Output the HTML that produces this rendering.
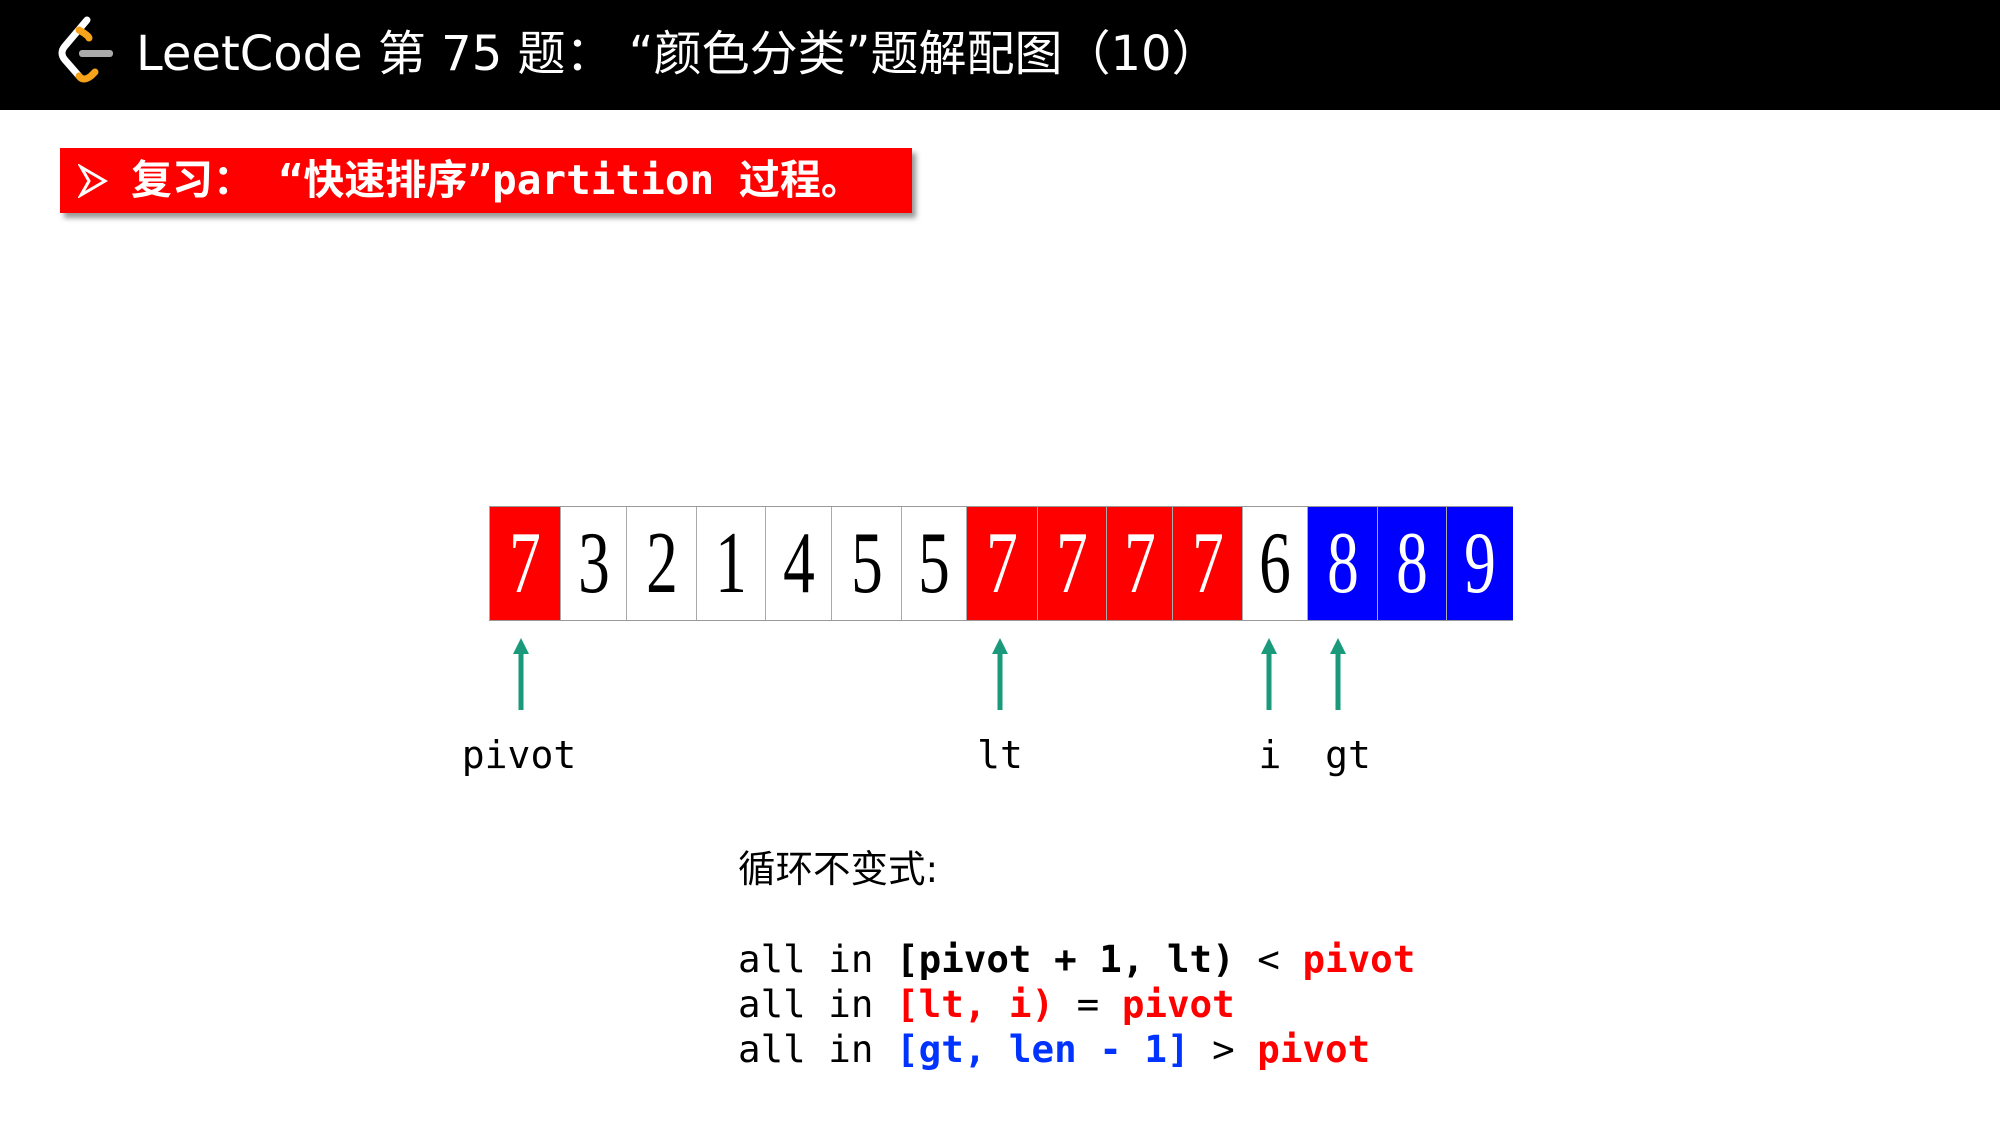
<!DOCTYPE html>
<html><head><meta charset="utf-8"><style>
body{margin:0;width:2000px;height:1125px;background:#fff;position:relative;overflow:hidden;font-family:"Liberation Sans","Noto Sans CJK SC",sans-serif}
.hdr{position:absolute;left:0;top:0;width:2000px;height:110px;background:#000}
.title{position:absolute;left:136px;top:22px;color:#fff;font-size:48px;line-height:64px;white-space:nowrap;font-family:"DejaVu Sans","Noto Sans CJK SC",sans-serif}
.ban{position:absolute;left:60px;top:148px;width:852px;height:65px;background:#f00;box-shadow:4px 5px 5px #999}
.ban span{position:absolute;left:71px;top:4px;color:#fff;font-weight:bold;font-size:41px;line-height:56px;white-space:nowrap;font-family:"DejaVu Sans Mono","Noto Sans CJK SC",monospace}
.c{position:absolute;top:507px;height:113px;border-left:1px solid #aaa;box-sizing:border-box;overflow:hidden;text-align:center;font-family:"Liberation Serif",serif;font-size:88px;line-height:113px}
.c b{display:inline-block;font-weight:normal;transform:scaleX(0.72)}
.r{background:#f00;color:#fff}.w{background:#fff;color:#000}.bl{background:#00f;color:#fff}
.lab{position:absolute;top:732px;font-family:"DejaVu Sans Mono",monospace;font-size:38px;line-height:46px;transform:translateX(-50%)}
.code{position:absolute;left:738px;font-family:"DejaVu Sans Mono","Noto Sans CJK SC",monospace;font-size:37.5px;line-height:45px;white-space:pre}
.k{font-weight:bold}.red{color:#f00;font-weight:bold}.blu{color:#0033ff;font-weight:bold}
</style></head><body>
<div class="hdr"></div>
<svg style="position:absolute;left:55px;top:16px" width="62" height="72" viewBox="0 0 62 72">
<path d="M32 4 L10 30 Q4 37 10 44 L24 60" stroke="#fff" stroke-width="7" fill="none" stroke-linecap="round"/>
<path d="M24 14 Q34 20 34 22" stroke="#f7a21b" stroke-width="7" fill="none" stroke-linecap="round"/>
<path d="M24 60 Q28 66 36 60 L40 56" stroke="#f7a21b" stroke-width="7" fill="none" stroke-linecap="round"/>
<rect x="24" y="34" width="34" height="7" rx="3" fill="#aaa"/>
</svg>
<div class="title">LeetCode 第 75 题： “颜色分类”题解配图（10）</div>
<div class="ban"><svg style="position:absolute;left:18px;top:16px" width="30" height="34" viewBox="0 0 30 34"><path d="M3 3 L27 17 L3 31 L11 17 Z" fill="none" stroke="#fff" stroke-width="3"/></svg><span>复习： “快速排序”partition 过程。</span></div>
<div style="position:absolute;left:489px;top:506px;width:1024px;height:115px;border:1px solid #999;box-sizing:border-box"></div>
<div class="c r" style="left:489px;width:71px"><b>7</b></div>
<div class="c w" style="left:560px;width:66px"><b>3</b></div>
<div class="c w" style="left:626px;width:70px"><b>2</b></div>
<div class="c w" style="left:696px;width:69px"><b>1</b></div>
<div class="c w" style="left:765px;width:66px"><b>4</b></div>
<div class="c w" style="left:831px;width:70px"><b>5</b></div>
<div class="c w" style="left:901px;width:65px"><b>5</b></div>
<div class="c r" style="left:966px;width:71px"><b>7</b></div>
<div class="c r" style="left:1037px;width:69px"><b>7</b></div>
<div class="c r" style="left:1106px;width:66px"><b>7</b></div>
<div class="c r" style="left:1172px;width:70px"><b>7</b></div>
<div class="c w" style="left:1242px;width:65px"><b>6</b></div>
<div class="c bl" style="left:1307px;width:70px"><b>8</b></div>
<div class="c bl" style="left:1377px;width:69px"><b>8</b></div>
<div class="c bl" style="left:1446px;width:67px"><b>9</b></div>
<svg style="position:absolute;left:0;top:630px" width="2000" height="90">
<g fill="#1a9a7a" stroke="#1a9a7a" stroke-width="5">
<line x1="521" y1="20" x2="521" y2="80"/><path d="M513 24 L521 8 L529 24Z" stroke="none"/>
<line x1="1000" y1="20" x2="1000" y2="80"/><path d="M992 24 L1000 8 L1008 24Z" stroke="none"/>
<line x1="1269" y1="20" x2="1269" y2="80"/><path d="M1261 24 L1269 8 L1277 24Z" stroke="none"/>
<line x1="1338" y1="20" x2="1338" y2="80"/><path d="M1330 24 L1338 8 L1346 24Z" stroke="none"/>
</g></svg>
<div class="lab" style="left:519px">pivot</div>
<div class="lab" style="left:1000px">lt</div>
<div class="lab" style="left:1270px">i</div>
<div class="lab" style="left:1348px">gt</div>
<div class="code" style="top:847px;font-family:'DejaVu Sans','Noto Sans CJK SC',sans-serif">循环不变式:</div>
<div class="code" style="top:937px">all in <span class="k">[pivot + 1, lt)</span> &lt; <span class="red">pivot</span>
all in <span class="red">[lt, i)</span> = <span class="red">pivot</span>
all in <span class="blu">[gt, len - 1]</span> &gt; <span class="red">pivot</span></div>
</body></html>
